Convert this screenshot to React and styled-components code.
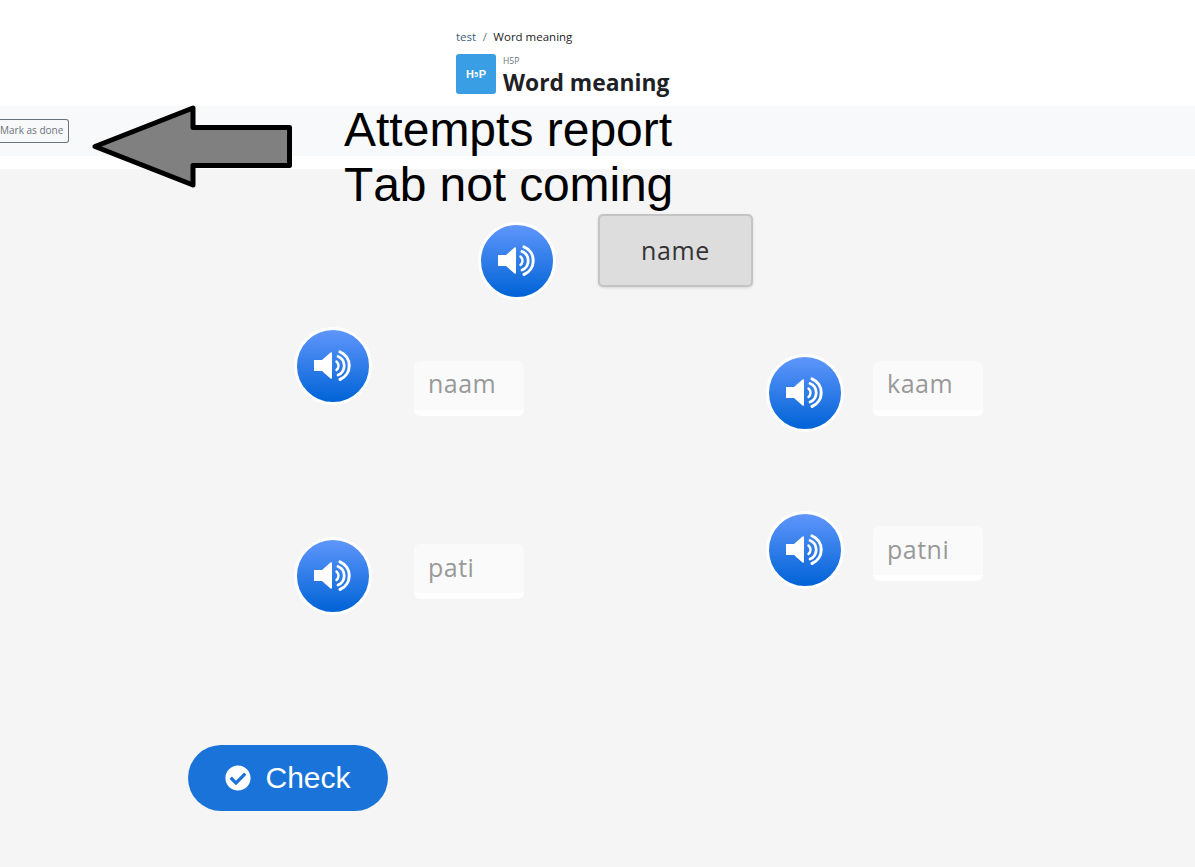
import styled, { createGlobalStyle } from "styled-components"
import { FaCheckCircle } from "react-icons/fa"

const uiFont = `"Open Sans", "Noto Sans", sans-serif`

const GlobalStyle = createGlobalStyle`
    html, body {
        margin: 0;
        padding: 0;
        background: #ffffff;
    }
    * {
        box-sizing: border-box;
    }
`

const words = [
    { id: "naam", x: 294, y: 327, boxX: 414, boxY: 361, pad: 4 },
    { id: "pati", x: 294, y: 537, boxX: 414, boxY: 544, pad: 5 },
    { id: "kaam", x: 766, y: 354, boxX: 873, boxY: 361, pad: 4 },
    { id: "patni", x: 766, y: 511, boxX: 873, boxY: 526, pad: 5 },
]

function SpeakerIcon() {
    return (
        <svg width="38" height="32" viewBox="0 0 38 32" fill="none">
            <path d="M0 10 H8 L16.5 2.5 Q18 1.5 18 3.5 V27.5 Q18 29.5 16.5 28.5 L8 21 H0 Z" fill="#fff" />
            <path d="M22.5 11.5 A5.5 5.5 0 0 1 22.5 20" stroke="#fff" strokeWidth="2.4" strokeLinecap="round" />
            <path d="M24 6.5 A10 10 0 0 1 24 25" stroke="#fff" strokeWidth="2.8" strokeLinecap="round" />
            <path d="M26 1.8 A15 15 0 0 1 26 29.5" stroke="#fff" strokeWidth="3" strokeLinecap="round" />
        </svg>
    )
}

export default function App() {
    return (
        <Page>
            <GlobalStyle />
            <Header>
                <HeaderInner>
                    <Breadcrumb>
                        <span>test</span>
                        <Slash>/</Slash>
                        <span>Word meaning</span>
                    </Breadcrumb>
                    <TitleRow>
                        <Logo>H<LogoFive>5</LogoFive>P</Logo>
                        <TitleText>
                            <Kind>H5P</Kind>
                            <Title>Word meaning</Title>
                        </TitleText>
                    </TitleRow>
                </HeaderInner>
            </Header>
            <ActionBand>
                <DoneButton>Mark as done</DoneButton>
            </ActionBand>
            <Spacer />
            <Stage>
                <AudioButton $x={478} $y={53}>
                    <SpeakerIcon />
                </AudioButton>
                <DragWord>name</DragWord>
                {words.map((word) => (
                    <div key={word.id}>
                        <AudioButton $x={word.x} $y={word.y - 169}>
                            <SpeakerIcon />
                        </AudioButton>
                        <DropWord $x={word.boxX} $y={word.boxY - 169} $pad={word.pad}>{word.id}</DropWord>
                    </div>
                ))}
                <CheckButton>
                    <FaCheckCircle size={26} />
                    Check
                </CheckButton>
            </Stage>
            <Arrow width="210" height="90" viewBox="0 0 210 90">
                <polygon points="5,42.5 103,4 103,23.5 199.5,23.5 199.5,61.5 103,61.5 103,81" fill="#808080" stroke="#000" strokeWidth="5" strokeLinejoin="round" />
            </Arrow>
            <Note>
                <div>Attempts report</div>
                <NoteLine>Tab not coming</NoteLine>
            </Note>
        </Page>
    )
}

const Page = styled.div`
    position: relative;
    width: 1195px;
    height: 867px;
    overflow: hidden;
    display: flex;
    flex-direction: column;
`
const Header = styled.header`
    height: 106px;
    padding: 28px 0 0 456px;
    background: #ffffff;
`
const HeaderInner = styled.div`
    display: flex;
    flex-direction: column;
    gap: 9px;
`
const Breadcrumb = styled.div`
    display: flex;
    gap: 6.5px;
    font-family: ${uiFont};
    font-size: 11.5px;
    line-height: 17px;
    color: #1d2125;
    & > span:first-child {
        color: #3a5f80;
    }
`
const Slash = styled.span`
    color: #6a737b;
`
const TitleRow = styled.div`
    display: flex;
    gap: 7px;
    align-items: flex-start;
`
const Logo = styled.div`
    width: 40px;
    height: 40px;
    border-radius: 3px;
    background: #399ee4;
    color: #ffffff;
    font-family: "Liberation Sans", sans-serif;
    font-weight: 700;
    font-size: 11px;
    display: flex;
    align-items: center;
    justify-content: center;
`
const LogoFive = styled.span`
    font-size: 7px;
    margin: 0 0.5px;
`
const TitleText = styled.div`
    display: flex;
    flex-direction: column;
    padding-top: 2px;
`
const Kind = styled.div`
    font-family: ${uiFont};
    font-size: 8.5px;
    line-height: 10px;
    color: #6a737b;
`
const Title = styled.h1`
    margin: 2px 0 0;
    font-family: ${uiFont};
    font-size: 22.8px;
    line-height: 30px;
    font-weight: 700;
    color: #1d2125;
`
const ActionBand = styled.div`
    height: 50px;
    background: #f8f9fa;
    padding-top: 13px;
`
const DoneButton = styled.button`
    display: block;
    width: 69px;
    height: 24px;
    margin: 0;
    padding: 0 8px 2px 0;
    text-align: right;
    border: 1px solid #6a737b;
    border-left: none;
    border-radius: 0 3px 3px 0;
    background: transparent;
    color: #6a737b;
    font-family: ${uiFont};
    font-size: 10px;
    white-space: nowrap;
`
const Spacer = styled.div`
    height: 13px;
    background: #ffffff;
`
const Stage = styled.main`
    position: relative;
    flex: 1;
    background: #f5f5f5;
`
const AudioButton = styled.div`
    position: absolute;
    left: ${(p) => p.$x}px;
    top: ${(p) => p.$y}px;
    width: 78px;
    height: 78px;
    border-radius: 50%;
    border: 3px solid #ffffff;
    background: linear-gradient(180deg, #5f96fb 0%, #0063d6 100%);
    display: flex;
    align-items: center;
    justify-content: center;
`
const DragWord = styled.div`
    position: absolute;
    left: 598px;
    top: 45px;
    width: 155px;
    height: 73px;
    padding-bottom: 2px;
    border: 2px solid #c4c4c4;
    border-radius: 5px;
    background: #dddddd;
    box-shadow: 0 1px 3px rgba(0, 0, 0, 0.12);
    color: #333333;
    font-family: ${uiFont};
    font-size: 25px;
    letter-spacing: 0.6px;
    display: flex;
    align-items: center;
    justify-content: center;
`
const DropWord = styled.div`
    position: absolute;
    left: ${(p) => p.$x}px;
    top: ${(p) => p.$y}px;
    width: 110px;
    height: 55px;
    padding: ${(p) => p.$pad}px 14px;
    border-radius: 6px;
    border-bottom: 6px solid #fefefe;
    background: #fafafa;
    color: #999999;
    font-family: ${uiFont};
    font-size: 25px;
    line-height: 36px;
    letter-spacing: 0.5px;
`
const CheckButton = styled.button`
    position: absolute;
    left: 188px;
    top: 576px;
    width: 200px;
    height: 66px;
    border: none;
    border-radius: 33px;
    background: #1a73d9;
    color: #ffffff;
    font-family: "Liberation Sans", sans-serif;
    font-size: 30px;
    font-kerning: none;
    display: flex;
    align-items: center;
    justify-content: center;
    gap: 14px;
    padding: 0;
`
const Arrow = styled.svg`
    position: absolute;
    left: 90px;
    top: 104px;
`
const Note = styled.div`
    position: absolute;
    left: 344px;
    top: 102px;
    font-family: "Liberation Sans", sans-serif;
    font-size: 48px;
    line-height: 55px;
    font-kerning: none;
    color: #000000;
`
const NoteLine = styled.div`
    letter-spacing: -0.12px;
`
